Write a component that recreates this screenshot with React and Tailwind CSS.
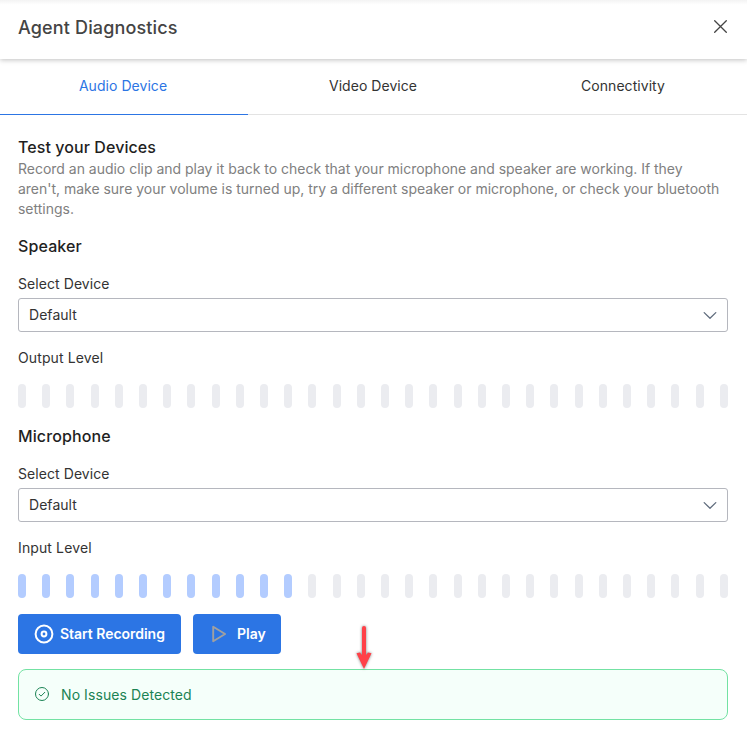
const TABS = ['Audio Device', 'Video Device', 'Connectivity'];

function LevelMeter({ active }) {
  return (
    <div className="flex h-6 justify-between">
      {Array.from({ length: 30 }, (_, i) => (
        <span key={i} className={i < active ? 'w-2 rounded-full bg-[#b3ccff]' : 'w-2 rounded-full bg-[#ebecf0]'} />
      ))}
    </div>
  );
}

function DeviceSection({ title, levelLabel, active }) {
  return (
    <section className="mb-4">
      <h2 className="h-6 text-[16px] leading-6 font-medium tracking-[0.12px] text-[#1f1f1f]">{title}</h2>
      <label className="mt-4 block h-5 leading-5 tracking-[0.07px]">Select Device</label>
      <button className="mt-1 flex h-[34px] w-full items-center justify-between rounded-[3px] border border-[#b5b7be] pr-[10px] pb-px pl-[10px]">
        <span>Default</span>
        <svg width="14" height="14" viewBox="0 0 14 14" fill="none" stroke="#5f6b7c" strokeWidth="1.3" strokeLinecap="round" strokeLinejoin="round">
          <path d="M1.2 4.6 7 10.2l5.8-5.6" />
        </svg>
      </button>
      <div className="mt-4 mb-4 h-5 leading-5 tracking-[0.12px]">{levelLabel}</div>
      <LevelMeter active={active} />
    </section>
  );
}

export default function App() {
  return (
    <div className="h-[738px] w-[747px] overflow-hidden bg-white font-['Inter',sans-serif] text-[14px] tracking-[0.05px] text-[#333]">
      <header className="relative flex h-[59px] items-center justify-between bg-linear-to-b from-[#f3f3f3] via-white via-8% to-white pr-[20px] pb-[4px] pl-[18px] shadow-[0_1px_5px_rgba(0,0,0,0.25)]">
        <h1 className="text-[18px] leading-6 font-medium tracking-[0.15px] text-[#444]">Agent Diagnostics</h1>
        <svg className="-mt-[2px]" width="13" height="13" viewBox="0 0 13 13" fill="none" stroke="#444" strokeWidth="1.3" strokeLinecap="round">
          <path d="M.7.7 12.3 12.3M12.3.7.7 12.3" />
        </svg>
      </header>
      <nav className="flex h-14 w-[748px] border-b border-[#e3e3e3]">
        {TABS.map((t, i) => (
          <div key={t} className={i === 0 ? '-mb-px flex w-[248px] justify-center border-b border-[#2c75e4] pt-[17px] pr-[2px] leading-5 text-[#2c75e4]' : 'flex flex-1 justify-center pt-[17px] leading-5'}>
            {t}
          </div>
        ))}
      </nav>
      <main className="px-[18px] pt-5 pr-[19px]">
        <h2 className="h-6 text-[16px] leading-6 font-medium tracking-[0.08px] text-[#1f1f1f]">Test your Devices</h2>
        <p className="mb-[15px] leading-5 tracking-[-0.015px] text-[#808080]">
          Record an audio clip and play it back to check that your microphone and speaker are working. If they aren't, make sure your volume is turned up, try a different speaker or microphone, or check your bluetooth settings.
        </p>
        <DeviceSection title="Speaker" levelLabel="Output Level" active={0} />
        <DeviceSection title="Microphone" levelLabel="Input Level" active={12} />
        <div className="relative flex gap-3 font-semibold tracking-[-0.03px] text-white">
          <button className="flex h-10 w-[163px] items-center rounded-[4px] bg-[#2c75e4] pb-px pl-4">
            <svg className="mt-px mr-[6px]" width="20" height="20" viewBox="0 0 20 20" fill="none" stroke="white">
              <circle cx="10" cy="10" r="8.4" strokeWidth="2" />
              <circle cx="10" cy="10" r="2.4" strokeWidth="2" />
            </svg>
            Start Recording
          </button>
          <button className="flex h-10 w-[88px] items-center rounded-[4px] bg-[#2c75e4] pb-px pl-4">
            <svg className="mt-px mr-[8px]" width="20" height="20" viewBox="0 0 20 20" fill="none" stroke="#a0a0a0" strokeWidth="1.9" strokeLinejoin="round">
              <path d="M4.2 2.7v14.6L16.1 10Z" />
            </svg>
            Play
          </button>
          <svg className="absolute top-[8px] left-[334px] z-10 drop-shadow-[0_0_1.5px_rgba(0,0,0,0.5)]" width="24" height="50" viewBox="0 0 24 50" fill="none" stroke="#ff4148">
            <path d="M12 6v32" strokeWidth="4" strokeLinecap="round" />
            <path d="M4.5 31.2 8 30.4 12 36l4-5.6 3.5.8L12 47Z" fill="#ff4148" stroke="none" />
          </svg>
        </div>
        <div className="mt-[15px] flex h-[51px] items-center rounded-[8px] border border-[#73e2a3] bg-[#f5fffa] pl-4 tracking-[0.08px] text-[#1b8354]">
          <svg className="mr-3 -mt-px" width="14" height="14" viewBox="0 0 14 14" fill="none" stroke="#1b8354" strokeLinecap="round" strokeLinejoin="round">
            <circle cx="7" cy="7" r="6.5" />
            <path d="M4.2 7.3 6 9.1 9.8 5.3" />
          </svg>
          No Issues Detected
        </div>
      </main>
    </div>
  );
}
